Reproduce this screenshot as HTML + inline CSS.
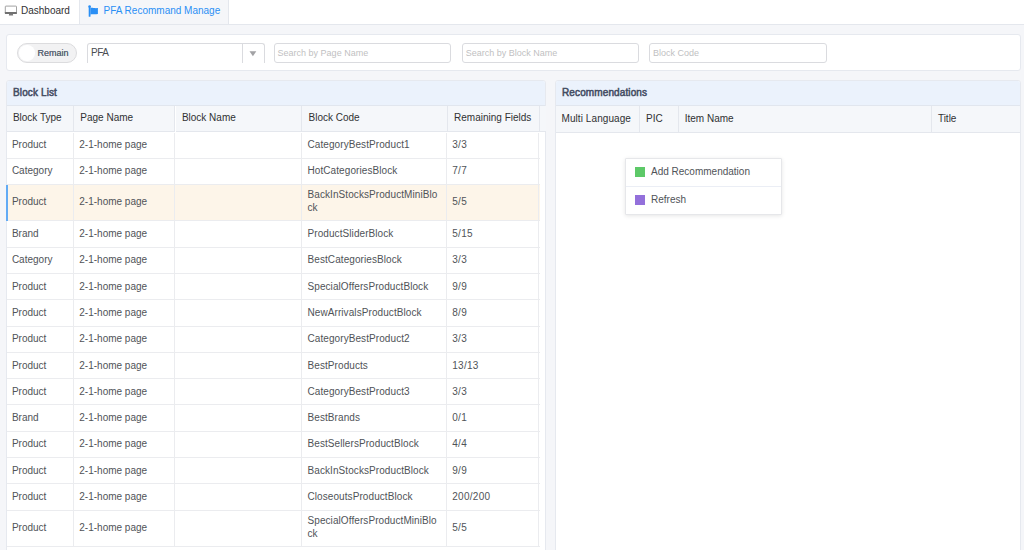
<!DOCTYPE html>
<html><head><meta charset="utf-8">
<style>
*{box-sizing:border-box;margin:0;padding:0}
html,body{width:1024px;height:550px;overflow:hidden;background:#f5f6f9;font-family:"Liberation Sans",sans-serif;font-size:10px;color:#303133}
div{position:absolute}
.tabbar{left:0;top:0;width:1024px;height:25px;background:#fff;border-bottom:1px solid #e4e7ed}
.tab{top:0;height:24px;line-height:22px;font-size:10px;white-space:nowrap}
.tab1{left:0;width:80px;color:#303133;background:#fff;border-right:1px solid #e4e7ed}
.tab2{left:80px;width:149px;color:#2a8ff5;background:#f5f6f9;border-right:1px solid #e4e7ed;height:24px}
.tab span{position:absolute;top:0}
.search{left:6px;top:34px;width:1014.6px;height:37px;background:#fff;border:1px solid #e6e9ef;border-radius:3px}
.inp{top:43px;height:19.7px;border:1px solid #dadbdf;border-radius:3px;background:#fff;font-size:9px;color:#bfbfc2;line-height:19px;padding-left:3px;white-space:nowrap}
.switch{left:17px;top:43px;width:59.8px;height:19.7px;border-radius:10px;background:#f2f2f3;border:1px solid #dcdcde}
.switch i{position:absolute;left:1px;top:1px;width:15.5px;height:15.5px;border-radius:50%;background:#fff}
.switch span{position:absolute;left:19.5px;top:0;line-height:18px;font-size:9px;color:#5a6472;text-shadow:0 0 0.4px #5a6472}
.panel{background:#fff;border:1px solid #e6e9ef;border-radius:3px;overflow:hidden}
.ph{left:0;top:0;right:0;height:25px;background:#ebf2fc;border-bottom:1px solid #e1e6ee;font-weight:normal;-webkit-text-stroke:0.5px #434c62;letter-spacing:0.12px;font-size:10px;line-height:24px;padding-left:6px;color:#434c62}
.th{top:105.8px;height:26.6px;background:#f5f7fa;border-bottom:1px solid #e4e7ed;border-right:1px solid #e4e7ed;line-height:23.4px;padding-left:6.4px;color:#303133;white-space:nowrap}
.th.r{height:26.9px;line-height:25.6px;padding-left:6px}
.row{left:6.5px;width:533px;background:#fff;border-bottom:1px solid #ebecef}
.row.sel{background:#fdf5e9}
.row.sel:before{content:'';position:absolute;left:-0.7px;top:0;bottom:-1px;width:1.7px;background:#62abf5;z-index:2}
.c{top:0;bottom:0;border-right:1px solid #ebecef;padding-left:6px;color:#4a4d52}
.t{position:absolute;line-height:13px;white-space:nowrap;color:#505358;z-index:3}
.t3{letter-spacing:0.08px}
.t4{letter-spacing:0.3px}
.menu{left:625px;top:158px;width:157px;height:56.5px;background:#fff;border:1px solid #e6e7ea;box-shadow:0 1px 4px rgba(0,0,0,.1);border-radius:1px}
.mi{left:0;right:0;height:28px;line-height:27px;color:#505358;white-space:nowrap}
.mi i{position:absolute;left:8.8px;top:8.1px;width:9.8px;height:9.8px}
.mi span{position:absolute;left:25px;top:-1px}
</style></head><body>
<div class="tabbar"></div>
<div class="tab tab1">
<svg style="position:absolute;left:4px;top:5px" width="14" height="11" viewBox="0 0 14 11"><rect x="1.3" y="1.1" width="11.2" height="7.2" rx="0.6" fill="#fff" stroke="#8a8a8a" stroke-width="0.8"/><rect x="0.9" y="6.9" width="12" height="2" rx="0.5" fill="#707070"/><path d="M5.2 8.8 L8.8 8.8 L9.2 10.5 L4.8 10.5 Z" fill="#7a7a7a"/></svg>
<span style="left:21px">Dashboard</span></div>
<div class="tab tab2">
<svg style="position:absolute;left:8.1px;top:5.2px" width="11" height="12" viewBox="0 0 11 12"><circle cx="1.6" cy="1.5" r="1.3" fill="#2a8ff5"/><rect x="0.7" y="1.5" width="1.8" height="10.3" rx="0.5" fill="#2a8ff5"/><path d="M2.4 2.9 C4.3 2.4 5.8 3.5 9.9 3.1 L9.9 8.9 C6.2 9.7 4.3 8.7 2.4 9.6 Z" fill="#2a8ff5"/></svg>
<span style="left:23.5px">PFA Recommand Manage</span></div>

<div class="search"></div>
<div class="switch"><i></i><span>Remain</span></div>
<div class="inp" style="left:87px;width:178px;color:#4a4d52;font-size:10px;letter-spacing:-0.5px;line-height:18px;border-bottom:0;border-radius:3px 3px 0 0">PFA</div>
<div style="left:242px;top:44px;width:1px;height:18.7px;background:#dadbdf"></div>
<svg style="position:absolute;left:249px;top:50.5px" width="8" height="6" viewBox="0 0 8 6"><path d="M0.5 0.3 L7.3 0.3 L3.9 5.3 Z" fill="#a2a2a5"/></svg>
<div class="inp" style="left:273.6px;width:177.4px">Search by Page Name</div>
<div class="inp" style="left:461.8px;width:177.2px">Search by Block Name</div>
<div class="inp" style="left:649px;width:178px">Block Code</div>

<div class="panel" style="left:6px;top:80px;width:540px;height:480px"><div class="ph">Block List</div></div>
<div class="th" style="left:6.5px;width:67.4px">Block Type</div>
<div class="th" style="left:73.9px;width:101.6px">Page Name</div>
<div class="th" style="left:175.5px;width:126.6px">Block Name</div>
<div class="th" style="left:302.1px;width:145.6px">Block Code</div>
<div class="th" style="left:447.7px;width:92.2px">Remaining Fields</div>
<div class="th" style="left:539.9px;width:5.6px;border-right:0"></div>
<div class="row" style="top:132.50px;height:26.28px">
<div class="c" style="left:0.0px;width:67.4px"></div>
<div class="c" style="left:67.4px;width:101.6px"></div>
<div class="c" style="left:169.0px;width:126.6px"></div>
<div class="c" style="left:295.6px;width:144.7px"></div>
<div class="c" style="left:440.3px;width:92.7px"></div>
</div>
<div class="row" style="top:158.78px;height:26.28px">
<div class="c" style="left:0.0px;width:67.4px"></div>
<div class="c" style="left:67.4px;width:101.6px"></div>
<div class="c" style="left:169.0px;width:126.6px"></div>
<div class="c" style="left:295.6px;width:144.7px"></div>
<div class="c" style="left:440.3px;width:92.7px"></div>
</div>
<div class="row sel" style="top:185.06px;height:36.40px">
<div class="c" style="left:0.0px;width:67.4px"></div>
<div class="c" style="left:67.4px;width:101.6px"></div>
<div class="c" style="left:169.0px;width:126.6px"></div>
<div class="c" style="left:295.6px;width:144.7px"></div>
<div class="c" style="left:440.3px;width:92.7px"></div>
</div>
<div class="row" style="top:221.46px;height:26.28px">
<div class="c" style="left:0.0px;width:67.4px"></div>
<div class="c" style="left:67.4px;width:101.6px"></div>
<div class="c" style="left:169.0px;width:126.6px"></div>
<div class="c" style="left:295.6px;width:144.7px"></div>
<div class="c" style="left:440.3px;width:92.7px"></div>
</div>
<div class="row" style="top:247.74px;height:26.28px">
<div class="c" style="left:0.0px;width:67.4px"></div>
<div class="c" style="left:67.4px;width:101.6px"></div>
<div class="c" style="left:169.0px;width:126.6px"></div>
<div class="c" style="left:295.6px;width:144.7px"></div>
<div class="c" style="left:440.3px;width:92.7px"></div>
</div>
<div class="row" style="top:274.02px;height:26.28px">
<div class="c" style="left:0.0px;width:67.4px"></div>
<div class="c" style="left:67.4px;width:101.6px"></div>
<div class="c" style="left:169.0px;width:126.6px"></div>
<div class="c" style="left:295.6px;width:144.7px"></div>
<div class="c" style="left:440.3px;width:92.7px"></div>
</div>
<div class="row" style="top:300.30px;height:26.28px">
<div class="c" style="left:0.0px;width:67.4px"></div>
<div class="c" style="left:67.4px;width:101.6px"></div>
<div class="c" style="left:169.0px;width:126.6px"></div>
<div class="c" style="left:295.6px;width:144.7px"></div>
<div class="c" style="left:440.3px;width:92.7px"></div>
</div>
<div class="row" style="top:326.58px;height:26.28px">
<div class="c" style="left:0.0px;width:67.4px"></div>
<div class="c" style="left:67.4px;width:101.6px"></div>
<div class="c" style="left:169.0px;width:126.6px"></div>
<div class="c" style="left:295.6px;width:144.7px"></div>
<div class="c" style="left:440.3px;width:92.7px"></div>
</div>
<div class="row" style="top:352.86px;height:26.28px">
<div class="c" style="left:0.0px;width:67.4px"></div>
<div class="c" style="left:67.4px;width:101.6px"></div>
<div class="c" style="left:169.0px;width:126.6px"></div>
<div class="c" style="left:295.6px;width:144.7px"></div>
<div class="c" style="left:440.3px;width:92.7px"></div>
</div>
<div class="row" style="top:379.14px;height:26.28px">
<div class="c" style="left:0.0px;width:67.4px"></div>
<div class="c" style="left:67.4px;width:101.6px"></div>
<div class="c" style="left:169.0px;width:126.6px"></div>
<div class="c" style="left:295.6px;width:144.7px"></div>
<div class="c" style="left:440.3px;width:92.7px"></div>
</div>
<div class="row" style="top:405.42px;height:26.28px">
<div class="c" style="left:0.0px;width:67.4px"></div>
<div class="c" style="left:67.4px;width:101.6px"></div>
<div class="c" style="left:169.0px;width:126.6px"></div>
<div class="c" style="left:295.6px;width:144.7px"></div>
<div class="c" style="left:440.3px;width:92.7px"></div>
</div>
<div class="row" style="top:431.70px;height:26.28px">
<div class="c" style="left:0.0px;width:67.4px"></div>
<div class="c" style="left:67.4px;width:101.6px"></div>
<div class="c" style="left:169.0px;width:126.6px"></div>
<div class="c" style="left:295.6px;width:144.7px"></div>
<div class="c" style="left:440.3px;width:92.7px"></div>
</div>
<div class="row" style="top:457.98px;height:26.28px">
<div class="c" style="left:0.0px;width:67.4px"></div>
<div class="c" style="left:67.4px;width:101.6px"></div>
<div class="c" style="left:169.0px;width:126.6px"></div>
<div class="c" style="left:295.6px;width:144.7px"></div>
<div class="c" style="left:440.3px;width:92.7px"></div>
</div>
<div class="row" style="top:484.26px;height:26.28px">
<div class="c" style="left:0.0px;width:67.4px"></div>
<div class="c" style="left:67.4px;width:101.6px"></div>
<div class="c" style="left:169.0px;width:126.6px"></div>
<div class="c" style="left:295.6px;width:144.7px"></div>
<div class="c" style="left:440.3px;width:92.7px"></div>
</div>
<div class="row" style="top:510.54px;height:36.40px">
<div class="c" style="left:0.0px;width:67.4px"></div>
<div class="c" style="left:67.4px;width:101.6px"></div>
<div class="c" style="left:169.0px;width:126.6px"></div>
<div class="c" style="left:295.6px;width:144.7px"></div>
<div class="c" style="left:440.3px;width:92.7px"></div>
</div>
<span class="t t0" style="left:11.9px;top:138px">Product</span>
<span class="t t1" style="left:79.3px;top:138px">2-1-home page</span>
<span class="t t3" style="left:307.5px;top:138px">CategoryBestProduct1</span>
<span class="t t4" style="left:452.2px;top:138px">3/3</span>
<span class="t t0" style="left:11.9px;top:164px">Category</span>
<span class="t t1" style="left:79.3px;top:164px">2-1-home page</span>
<span class="t t3" style="left:307.5px;top:164px">HotCategoriesBlock</span>
<span class="t t4" style="left:452.2px;top:164px">7/7</span>
<span class="t t0" style="left:11.9px;top:195px">Product</span>
<span class="t t1" style="left:79.3px;top:195px">2-1-home page</span>
<span class="t t3" style="left:307.5px;top:188px">BackInStocksProductMiniBlo<br>ck</span>
<span class="t t4" style="left:452.2px;top:195px">5/5</span>
<span class="t t0" style="left:11.9px;top:227px">Brand</span>
<span class="t t1" style="left:79.3px;top:227px">2-1-home page</span>
<span class="t t3" style="left:307.5px;top:227px">ProductSliderBlock</span>
<span class="t t4" style="left:452.2px;top:227px">5/15</span>
<span class="t t0" style="left:11.9px;top:253px">Category</span>
<span class="t t1" style="left:79.3px;top:253px">2-1-home page</span>
<span class="t t3" style="left:307.5px;top:253px">BestCategoriesBlock</span>
<span class="t t4" style="left:452.2px;top:253px">3/3</span>
<span class="t t0" style="left:11.9px;top:280px">Product</span>
<span class="t t1" style="left:79.3px;top:280px">2-1-home page</span>
<span class="t t3" style="left:307.5px;top:280px">SpecialOffersProductBlock</span>
<span class="t t4" style="left:452.2px;top:280px">9/9</span>
<span class="t t0" style="left:11.9px;top:306px">Product</span>
<span class="t t1" style="left:79.3px;top:306px">2-1-home page</span>
<span class="t t3" style="left:307.5px;top:306px">NewArrivalsProductBlock</span>
<span class="t t4" style="left:452.2px;top:306px">8/9</span>
<span class="t t0" style="left:11.9px;top:332px">Product</span>
<span class="t t1" style="left:79.3px;top:332px">2-1-home page</span>
<span class="t t3" style="left:307.5px;top:332px">CategoryBestProduct2</span>
<span class="t t4" style="left:452.2px;top:332px">3/3</span>
<span class="t t0" style="left:11.9px;top:359px">Product</span>
<span class="t t1" style="left:79.3px;top:359px">2-1-home page</span>
<span class="t t3" style="left:307.5px;top:359px">BestProducts</span>
<span class="t t4" style="left:452.2px;top:359px">13/13</span>
<span class="t t0" style="left:11.9px;top:385px">Product</span>
<span class="t t1" style="left:79.3px;top:385px">2-1-home page</span>
<span class="t t3" style="left:307.5px;top:385px">CategoryBestProduct3</span>
<span class="t t4" style="left:452.2px;top:385px">3/3</span>
<span class="t t0" style="left:11.9px;top:411px">Brand</span>
<span class="t t1" style="left:79.3px;top:411px">2-1-home page</span>
<span class="t t3" style="left:307.5px;top:411px">BestBrands</span>
<span class="t t4" style="left:452.2px;top:411px">0/1</span>
<span class="t t0" style="left:11.9px;top:437px">Product</span>
<span class="t t1" style="left:79.3px;top:437px">2-1-home page</span>
<span class="t t3" style="left:307.5px;top:437px">BestSellersProductBlock</span>
<span class="t t4" style="left:452.2px;top:437px">4/4</span>
<span class="t t0" style="left:11.9px;top:464px">Product</span>
<span class="t t1" style="left:79.3px;top:464px">2-1-home page</span>
<span class="t t3" style="left:307.5px;top:464px">BackInStocksProductBlock</span>
<span class="t t4" style="left:452.2px;top:464px">9/9</span>
<span class="t t0" style="left:11.9px;top:490px">Product</span>
<span class="t t1" style="left:79.3px;top:490px">2-1-home page</span>
<span class="t t3" style="left:307.5px;top:490px">CloseoutsProductBlock</span>
<span class="t t4" style="left:452.2px;top:490px">200/200</span>
<span class="t t0" style="left:11.9px;top:521px">Product</span>
<span class="t t1" style="left:79.3px;top:521px">2-1-home page</span>
<span class="t t3" style="left:307.5px;top:514px">SpecialOffersProductMiniBlo<br>ck</span>
<span class="t t4" style="left:452.2px;top:521px">5/5</span>

<div class="panel" style="left:555px;top:80px;width:465.6px;height:480px"><div class="ph">Recommendations</div></div>
<div class="th r" style="left:555.5px;width:84.5px;letter-spacing:0.08px">Multi Language</div>
<div class="th r" style="left:640px;width:38.75px">PIC</div>
<div class="th r" style="left:678.75px;width:253.15px">Item Name</div>
<div class="th r" style="left:931.9px;width:87.9px;border-right:0">Title</div>

<div class="menu">
<div class="mi" style="top:0;border-bottom:1px solid #ebeef5"><i style="background:#5dc968"></i><span>Add Recommendation</span></div>
<div class="mi" style="top:28px"><i style="background:#9370db"></i><span>Refresh</span></div>
</div>
</body></html>
